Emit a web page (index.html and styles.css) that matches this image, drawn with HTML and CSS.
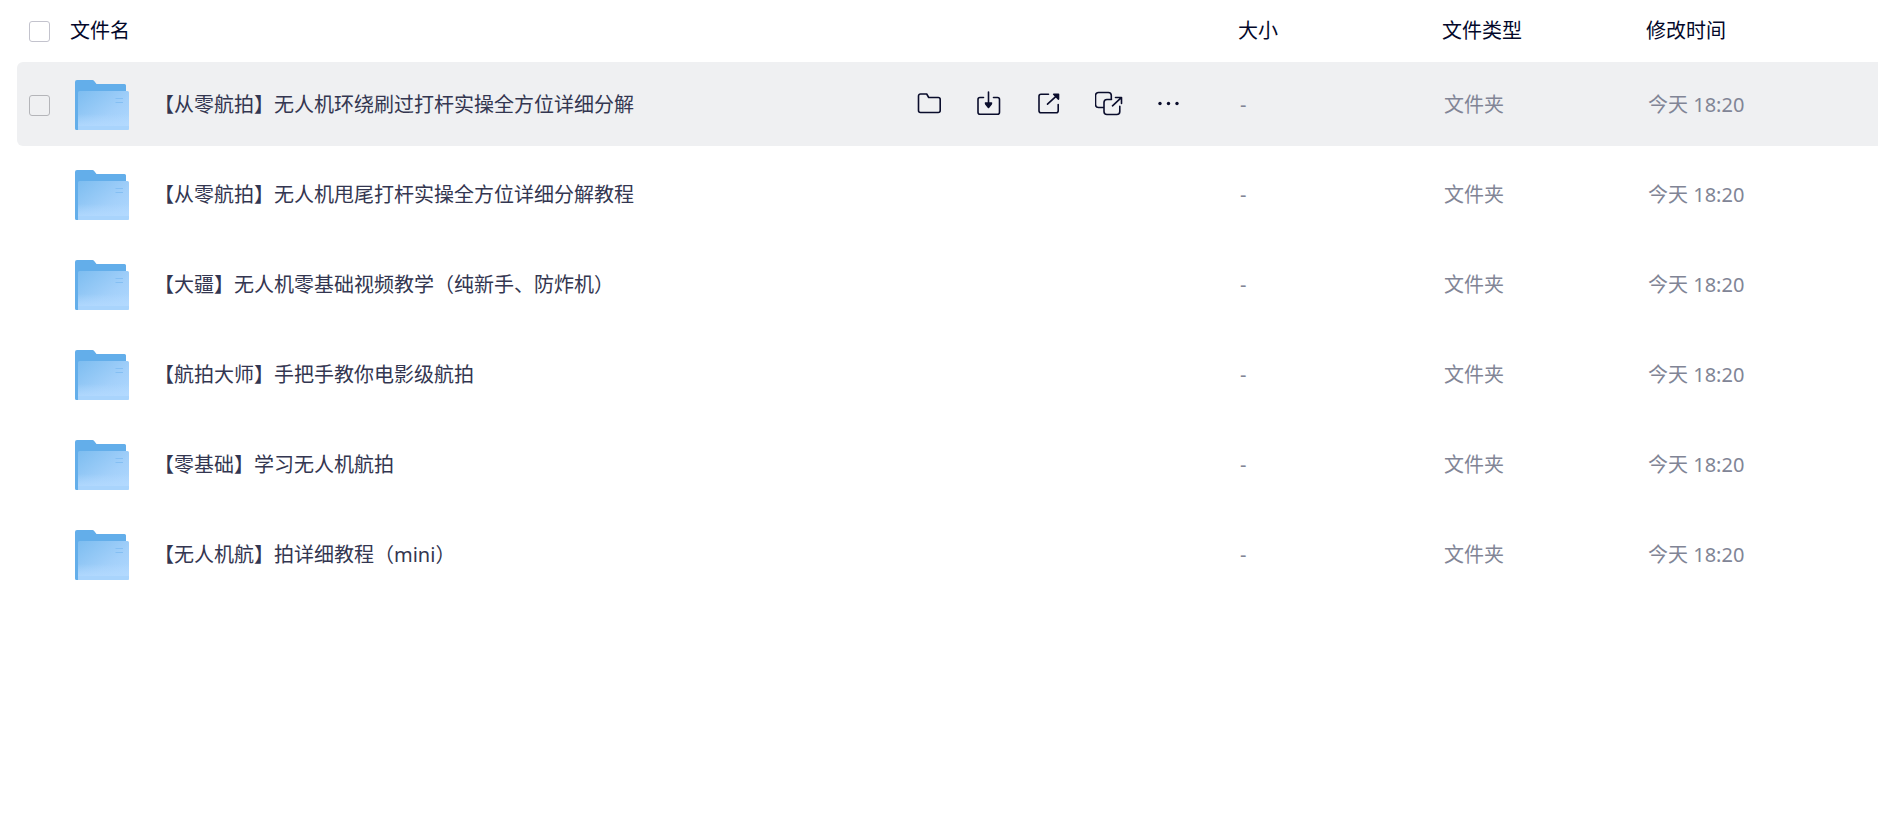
FILE: index.html
```html
<!DOCTYPE html>
<html lang="zh-CN">
<head>
<meta charset="utf-8">
<title>文件列表</title>
<link rel="stylesheet" href="styles.css">
</head>
<body>
<svg class="defs" aria-hidden="true">
  <defs>
    <linearGradient id="front" x1="0" y1="0" x2="1" y2="1">
      <stop offset="0" stop-color="#7dbdf0"/>
      <stop offset="0.6" stop-color="#a3d0fa"/>
      <stop offset="1" stop-color="#b0d8ff"/>
    </linearGradient>
    <linearGradient id="shine" x1="0" y1="0" x2="0" y2="1">
      <stop offset="0" stop-color="#b8dcff" stop-opacity="0"/>
      <stop offset="1" stop-color="#b4daff" stop-opacity="0.8"/>
    </linearGradient>
    <symbol id="folder" viewBox="0 0 54 50">
      <path d="M0 2a2 2 0 0 1 2-2h15.500a2 2 0 0 1 1.500.7L21.500 4H49.500a1.500 1.500 0 0 1 1.500 1.500V30L3 50H1.500A1.500 1.500 0 0 1 0 48.500z" fill="#63aeea"/>
      <path d="M3 12.500A1.500 1.500 0 0 1 4.500 11h48a1.500 1.500 0 0 1 1.500 1.500v36a1.500 1.500 0 0 1-1.500 1.500H3z" fill="url(#front)"/>
      <path d="M3 34h51v12H3z" fill="url(#shine)"/>
      <path d="M3 46h51v2.500a1.500 1.500 0 0 1-1.500 1.500H3z" fill="#a9d4fc"/>
      <path d="M40.500 18.500h7.500M40.500 22.500h7.500" stroke="#84bff3" stroke-width="1"/>
    </symbol>
  </defs>
</svg>
<table class="files">
  <colgroup><col class="col-check"><col><col class="col-meta"><col class="col-meta"><col class="col-time"></colgroup>
  <thead>
    <tr>
      <th scope="col" class="check"><input type="checkbox" class="box" aria-label="全选"></th>
      <th scope="col" class="title">文件名</th>
      <th scope="col">大小</th>
      <th scope="col">文件类型</th>
      <th scope="col">修改时间</th>
    </tr>
  </thead>
  <tbody>
    <tr class="active">
      <td class="check"><input type="checkbox" class="box" aria-label="选择文件"></td>
      <td>
        <div class="entry">
          <svg class="folder" aria-hidden="true"><use href="#folder"/></svg>
          <span class="name">【从零航拍】无人机环绕刷过打杆实操全方位详细分解</span>
          <div class="actions">
            <button type="button" aria-label="打开"><svg viewBox="0 0 28 28"><path d="M5.500 4h6.200l2 3.500h9.500a2 2 0 0 1 2 2v11a2 2 0 0 1-2 2H5.500a2 2 0 0 1-2-2V6a2 2 0 0 1 2-2z"/></svg></button>
            <button type="button" aria-label="下载"><svg viewBox="0 0 28 28"><path d="M8.500 7.500h-3.500a2 2 0 0 0-2 2v12.800a2 2 0 0 0 2 2h17.500a2 2 0 0 0 2-2V9.500a2 2 0 0 0-2-2H18.500M13.500 2v12"/><path class="solid" d="M10.500 13h6l-.4 1.200-2.600 3.200-2.600-3.200z"/></svg></button>
            <button type="button" aria-label="分享"><svg viewBox="0 0 28 28"><path d="M13.500 4.300h-7.500a2 2 0 0 0-2 2v14.500a2 2 0 0 0 2 2h15.200a2 2 0 0 0 2-2V14.500M12.500 14.200l9-8.400"/><path class="solid" d="M18.700 4.300h4.800v4.800z"/></svg></button>
            <button type="button" aria-label="转存"><svg viewBox="0 0 28 28"><path d="M8.500 17.500h-5a3 3 0 0 1-3-3V5.500a3 3 0 0 1 3-3h9.800a3 3 0 0 1 3 3v3.700M16.500 9.500h-4.500a3 3 0 0 0-3 3v9a3 3 0 0 0 3 3h9.800a3 3 0 0 0 3-3v-5.200M17.500 15.800l8.500-8M20.500 7.500h6v6"/></svg></button>
            <button type="button" aria-label="更多"><svg viewBox="0 0 28 28"><g class="dots"><circle cx="5" cy="13.500" r="1.700"/><circle cx="13.500" cy="13.500" r="1.700"/><circle cx="22" cy="13.500" r="1.700"/></g></svg></button>
          </div>
        </div>
      </td>
      <td class="meta">-</td><td class="meta">文件夹</td><td class="meta">今天 18:20</td>
    </tr>
    <tr>
      <td></td>
      <td><div class="entry"><svg class="folder" aria-hidden="true"><use href="#folder"/></svg><span class="name">【从零航拍】无人机甩尾打杆实操全方位详细分解教程</span></div></td>
      <td class="meta">-</td><td class="meta">文件夹</td><td class="meta">今天 18:20</td>
    </tr>
    <tr>
      <td></td>
      <td><div class="entry"><svg class="folder" aria-hidden="true"><use href="#folder"/></svg><span class="name">【大疆】无人机零基础视频教学（纯新手、防炸机）</span></div></td>
      <td class="meta">-</td><td class="meta">文件夹</td><td class="meta">今天 18:20</td>
    </tr>
    <tr>
      <td></td>
      <td><div class="entry"><svg class="folder" aria-hidden="true"><use href="#folder"/></svg><span class="name">【航拍大师】手把手教你电影级航拍</span></div></td>
      <td class="meta">-</td><td class="meta">文件夹</td><td class="meta">今天 18:20</td>
    </tr>
    <tr>
      <td></td>
      <td><div class="entry"><svg class="folder" aria-hidden="true"><use href="#folder"/></svg><span class="name">【零基础】学习无人机航拍</span></div></td>
      <td class="meta">-</td><td class="meta">文件夹</td><td class="meta">今天 18:20</td>
    </tr>
    <tr>
      <td></td>
      <td><div class="entry"><svg class="folder" aria-hidden="true"><use href="#folder"/></svg><span class="name">【无人机航】拍详细教程（mini）</span></div></td>
      <td class="meta">-</td><td class="meta">文件夹</td><td class="meta">今天 18:20</td>
    </tr>
  </tbody>
</table>
</body>
</html>
```
FILE: styles.css
```css
* {
  box-sizing: border-box;
}

body {
  margin: 0;
  padding-left: 17px;
  background: #fff;
  color: #03081a;
  font-family: "Noto Sans", "Noto Sans CJK SC", sans-serif;
  font-size: 20px;
  font-weight: 400;
  line-height: 28px;
}

.defs {
  position: absolute;
  width: 0;
  height: 0;
}

.files {
  width: 100%;
  table-layout: fixed;
  border-collapse: separate;
  border-spacing: 0 6px;
}

.col-check {
  width: 48px;
}

.col-meta {
  width: 204px;
}

.col-time {
  width: 232px;
}

th,
td {
  padding: 0;
  text-align: left;
  vertical-align: middle;
}

th {
  height: 50px;
  font-weight: 400;
  color: #03082a;
}

td {
  height: 84px;
  padding-top: 2px;
}

.check {
  padding-left: 12px;
}

.title {
  padding-left: 5px;
}

.active td {
  background: #eff0f2;
}

.active td:first-child {
  border-radius: 6px 0 0 6px;
}

.box {
  appearance: none;
  display: block;
  width: 21px;
  height: 21px;
  margin: 0;
  border: 1px solid #c3c3cd;
  border-radius: 3px;
  background: transparent;
}

.active .box {
  border-color: #b4b5b9;
}

.entry {
  display: flex;
  align-items: center;
  padding-left: 10px;
}

.folder {
  flex: none;
  width: 54px;
  height: 50px;
}

.name {
  margin-left: 25px;
  color: #333650;
  white-space: nowrap;
}

.meta {
  padding-left: 2px;
  color: #818596;
}

.actions {
  display: flex;
  gap: 32px;
  margin-left: auto;
  padding-right: 55px;
  padding-bottom: 2px;
}

.actions button {
  width: 28px;
  height: 28px;
  padding: 0;
  border: 0;
  background: none;
}

.actions svg {
  display: block;
  width: 28px;
  height: 28px;
  fill: none;
  stroke: #0a0d2c;
  stroke-width: 1.6;
  stroke-linecap: round;
  stroke-linejoin: round;
}

.actions .solid {
  fill: #0a0d2c;
}

.actions .dots {
  fill: #0a0d2c;
  stroke: none;
}
```
